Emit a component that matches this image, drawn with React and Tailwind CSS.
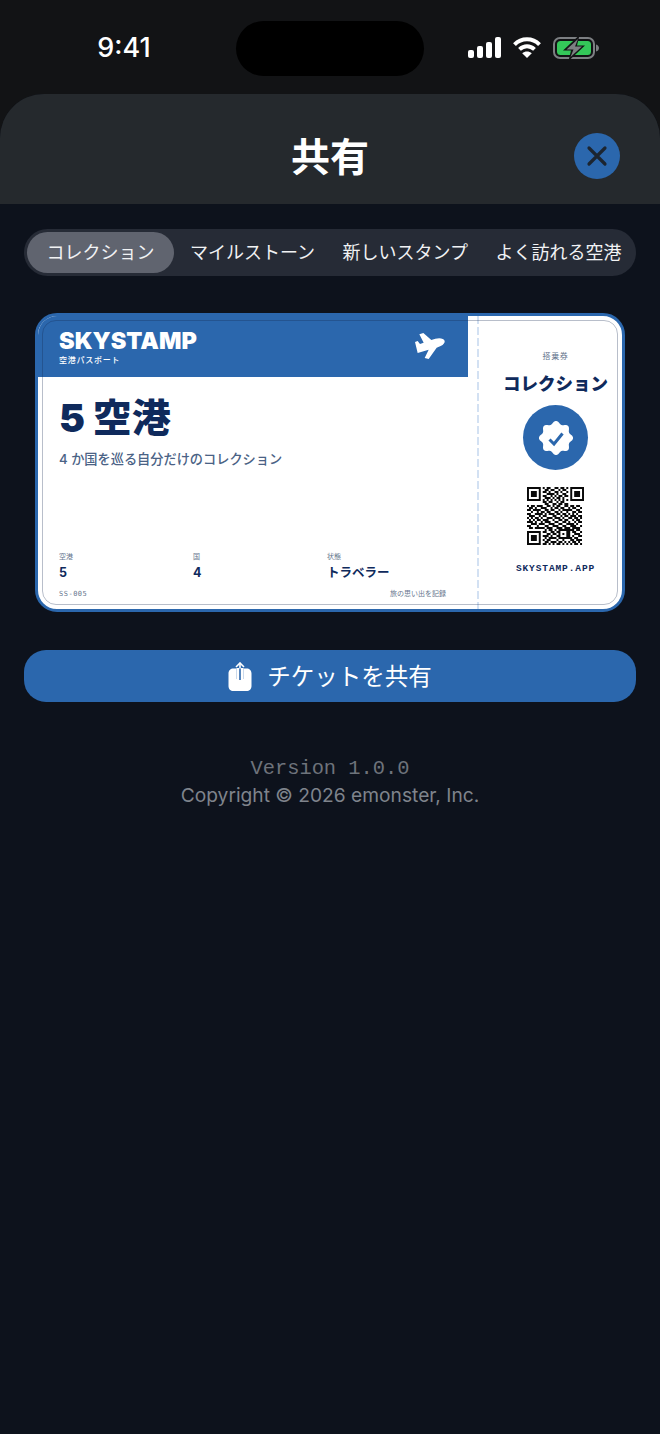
const SANS = { fontFamily: 'Inter, "Noto Sans CJK JP", sans-serif' }

// modules copied by eye from the reference; the three finders are added in QrCode
const QR = [
  '........ 1011001101101 ........',
  '........ 0110110010110 ........',
  '........ 1101001101001 ........',
  '........ 0011110100110 ........',
  '........ 1100101011011 ........',
  '........ 0111010110100 ........',
  '........ 1010101010101 ........',
  '........ 1101100101100 ........',
  '........ 0110011011011 ........',
  '1011011 1 0011010110011 0110110',
  '0110100 1 1100101101100 1011001',
  '1101111 0 0110110010111 1100110',
  '0010010 1 1011001101001 0011011',
  '1100111 1 0101110110110 1010100',
  '0111001 0 1100011001011 0111011',
  '1010110 1 0011101110100 1101101',
  '0101011 0 1110010011011 0010110',
  '1110100 1 0111001100110 1001011',
  '0011101 1 1001110011001 1110100',
  '1100010 0 0110011100110 0111001',
  '0110111 1 1011100111011 1011110',
  '........ 0101101011111 1110110',
  '........ 1100110110001 1011001',
  '........ 0011011010101 1001110',
  '........ 1110100110001 1010011',
  '........ 0101111011111 1101100',
  '........ 1011000100100 0110111',
  '........ 0110111011010 1011010',
  '........ 1101010110101 0101101',
]

const isFinder = (x, y) => (x < 8 && y < 8) || (x > 20 && y < 8) || (x < 8 && y > 20)

function finderPath(ox, oy) {
  return `M${ox} ${oy}h7v7h-7zM${ox + 1} ${oy + 1}v5h5v-5zM${ox + 2} ${oy + 2}h3v3h-3z`
}

function QrCode() {
  let d = finderPath(0, 0) + finderPath(22, 0) + finderPath(0, 22)
  QR.forEach((row, y) => {
    row.replace(/ /g, '').split('').forEach((cell, x) => {
      if (cell === '1' && !isFinder(x, y)) d += `M${x} ${y}h1v1h-1z`
    })
  })
  return (
    <svg width="57" height="58" viewBox="0 0 29 29" preserveAspectRatio="none">
      <path d={d} fill="#0a0a0a" fillRule="evenodd" />
    </svg>
  )
}

// eight soft lobes, like the seal in the reference
function sealPath() {
  let d = ''
  for (let i = 0; i < 96; i++) {
    const a = (i / 96) * Math.PI * 2
    const r = 15.6 + 1.5 * Math.cos(8 * a)
    d += (i ? 'L' : 'M') + (17 + r * Math.sin(a)).toFixed(2) + ' ' + (17 - r * Math.cos(a)).toFixed(2)
  }
  return d + 'Z'
}

function StatusIcons() {
  return (
    <div className="flex items-center gap-[12px]">
      <svg width="33" height="21" viewBox="0 0 33 21">
        <rect x="0" y="13" width="6" height="8" rx="2" fill="#fff" />
        <rect x="9" y="9" width="6" height="12" rx="2" fill="#fff" />
        <rect x="18" y="5" width="6" height="16" rx="2" fill="#fff" />
        <rect x="27" y="0" width="6" height="21" rx="2" fill="#fff" />
      </svg>
      <svg width="28" height="21" viewBox="0 0 28 21" fill="none">
        <path d="M1.5 7.6C8.5 0.6 19.5 0.6 26.5 7.6" stroke="#fff" strokeWidth="4" />
        <path d="M6.5 12.4C11 8.2 17 8.2 21.5 12.4" stroke="#fff" strokeWidth="4" />
        <path d="M14 21L9.2 16.2C12 14 16 14 18.8 16.2Z" fill="#fff" />
      </svg>
      <svg width="46" height="24" viewBox="0 0 46 24" fill="none">
        <rect x="1" y="2" width="40" height="20" rx="6" stroke="#7c7f82" strokeWidth="2" />
        <rect x="4" y="5" width="34" height="14" rx="3.5" fill="#34c759" />
        <path d="M43 8.5C45 9 46 10.5 46 12C46 13.5 45 15 43 15.5Z" fill="#7c7f82" />
        <path d="M26.5 -1L10 14.5H18L15.5 25L32 9.5H24Z" fill="#121315" />
        <path d="M25 3L13.5 13.5H20.5L17.5 21L29 10.5H22Z" fill="#7c7f82" />
      </svg>
    </div>
  )
}

function ShareIcon() {
  return (
    <svg width="24" height="29" viewBox="0 0 24 29" fill="none">
      <path d="M8.5 6.5H5.5C2.5 6.5 0.5 8.5 0.5 11.5V24C0.5 27 2.5 29 5.5 29H18.5C21.5 29 23.5 27 23.5 24V11.5C23.5 8.5 21.5 6.5 18.5 6.5H15.5V17H8.5Z" fill="#fff" />
      <rect x="8.5" y="6" width="7" height="12" fill="#fff" />
      <path d="M12 1.5V18" stroke="#2b67ad" strokeWidth="1.6" />
      <path d="M12 1.5V6.5" stroke="#fff" strokeWidth="1.6" />
      <path d="M8 5L12 1L16 5" stroke="#fff" strokeWidth="1.6" />
    </svg>
  )
}

function Stat({ label, value, className }) {
  return (
    <div className={className}>
      <p className="text-[7px] leading-[9px] text-[#66768e]">{label}</p>
      <p className="mt-[4px] text-[12.5px] leading-[16px] font-bold text-[#0f2a5c]">{value}</p>
    </div>
  )
}

function Ticket() {
  return (
    <div className="relative mx-[11px] h-[299px] overflow-hidden rounded-[22px] border-[3px] border-[#2b67ad] bg-white flex">
      {/* main part */}
      <div className="w-[440px] flex flex-col">
        <div className="mr-[10px] h-[61px] bg-[#2b67ad] pl-[21px] pr-[23px] flex items-center justify-between">
          <div className="text-white">
            <p className="text-[23.5px] leading-[26px] font-black mt-[-1px]">SKYSTAMP</p>
            <p className="mt-[1px] text-[8px] leading-[10px] tracking-[0.75px] font-medium">空港パスポート</p>
          </div>
          <svg width="30" height="26" viewBox="45 42 90 78" className="mt-[-1px]">
            <path d="M134 66C132 57 118 56 106 59L94 63L70 42L58 46L71 71L60 75L53 66L45 69L53 102L86 92L74 117L86 120L110 86L122 81C131 77 135 71 134 66Z" fill="#fff" />
          </svg>
        </div>
        <div className="flex-1 pl-[21px] pr-[32px] flex flex-col">
          <p className="mt-[18px] text-[39px] leading-[46px] font-black text-[#0f2a5c]">5 空港</p>
          <p className="mt-[9px] text-[13.2px] leading-[18px] font-medium text-[#4a6285]">4 か国を巡る自分だけのコレクション</p>
          <div className="mt-[84px] flex">
            <Stat label="空港" value="5" className="w-[134px]" />
            <Stat label="国" value="4" className="w-[134px]" />
            <Stat label="状態" value="トラベラー" />
          </div>
          <div className="mt-[8px] flex items-center justify-between text-[7px] leading-[10px] text-[#66768e]">
            <span className="tracking-[0.5px]" style={{ fontFamily: '"DejaVu Sans Mono", monospace' }}>SS-005</span>
            <span>旅の思い出を記録</span>
          </div>
        </div>
      </div>
      {/* perforation */}
      <div className="w-[2px] -ml-[1px] bg-[repeating-linear-gradient(to_bottom,#d3e1f3_0,#d3e1f3_8px,transparent_8px,transparent_11px)]" />
      {/* stub */}
      <div className="flex-1 pl-[10px] flex flex-col items-center">
        <p className="mt-[35px] text-[8px] leading-[10px] tracking-[0.6px] text-[#66768e]">搭乗券</p>
        <p className="mt-[12px] text-[17.5px] leading-[22px] font-black text-[#0f2a5c]">コレクション</p>
        <div className="mt-[10px] h-[65px] w-[65px] rounded-full bg-[#2b67ad] flex items-center justify-center">
          <svg width="34" height="34" viewBox="0 0 34 34" fill="none">
            <path d={sealPath()} fill="#fff" />
            <path d="M10.5 18.5L15 23L23.5 12.5" stroke="#2b67ad" strokeWidth="3" />
          </svg>
        </div>
        <div className="mt-[17px] h-[58px]">
          <QrCode />
        </div>
        <p className="mt-[18px] text-[9.5px] leading-[12px] font-bold tracking-[0.9px] text-[#0f2a5c]" style={{ fontFamily: '"Liberation Mono", monospace' }}>SKYSTAMP.APP</p>
      </div>
      {/* inset keyline over the whole ticket */}
      <div className="absolute inset-[4px] rounded-[14px] border border-[#14284f]/30 pointer-events-none" />
    </div>
  )
}

export default function App() {
  return (
    <div className="min-h-[1434px] flex flex-col bg-[#121315]" style={SANS}>
      {/* status bar */}
      <div className="h-[94px] pt-[21px] flex items-start">
        <div className="w-[236px] h-[55px] flex items-center justify-center">
          <span className="ml-[12px] text-[27px] font-medium text-white">9:41</span>
        </div>
        <div className="w-[188px] h-[55px] rounded-[28px] bg-black" />
        <div className="h-[55px] pl-[44px] flex items-center mt-[-1px]">
          <StatusIcons />
        </div>
      </div>

      {/* sheet */}
      <div className="flex-1 rounded-t-[44px] overflow-hidden bg-[#0d121c]">
        <div className="h-[110px] pt-[14px] bg-[#25292d] grid grid-cols-[1fr_auto_1fr] items-center">
          <div />
          <h1 className="text-[39px] font-semibold text-white leading-none">共有</h1>
          <div className="flex justify-end pr-[40px]">
            <button className="h-[46px] w-[46px] rounded-full bg-[#2b67ad] flex items-center justify-center">
              <svg width="22" height="22" viewBox="0 0 22 22" fill="none">
                <path d="M3 3L19 19M19 3L3 19" stroke="#1c2530" strokeWidth="3.2" strokeLinecap="round" />
              </svg>
            </button>
          </div>
        </div>

        <div className="px-[24px] pt-[25px]">
          {/* tabs */}
          <div className="h-[47px] rounded-full bg-[#262b36] p-[3px] flex items-center overflow-hidden whitespace-nowrap text-[18px] text-[#f1f2f4]">
            <div className="h-[41px] w-[147px] rounded-full bg-[#60646f] flex items-center justify-center">コレクション</div>
            <div className="pl-[16px] flex gap-[27.5px]">
              <span>マイルストーン</span>
              <span>新しいスタンプ</span>
              <span>よく訪れる空港</span>
            </div>
          </div>

          <div className="mt-[37px]">
            <Ticket />
          </div>

          <button className="mt-[38px] w-full h-[52px] rounded-[22px] bg-[#2b67ad] flex items-center justify-center gap-[15px] text-[23.5px] text-white">
            <ShareIcon />
            <span className="pt-[1px]">チケットを共有</span>
          </button>

          <div className="mt-[54px] text-center">
            <p className="text-[20.4px] leading-[26px] text-[#6e737b]" style={{ fontFamily: '"Liberation Mono", monospace' }}>Version 1.0.0</p>
            <p className="text-[19.2px] leading-[26px] text-[#7f848c]">Copyright © 2026 emonster, Inc.</p>
          </div>
        </div>
      </div>
    </div>
  )
}
